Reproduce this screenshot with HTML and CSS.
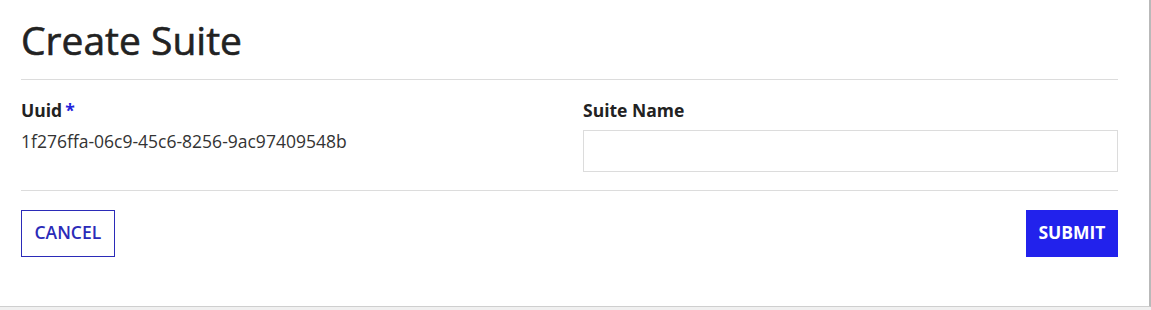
FILE: index.html
```html
<!DOCTYPE html>
<html lang="en">
<head>
    <meta charset="UTF-8">
    <meta name="viewport" content="width=device-width, initial-scale=1.0">
    <title>Create Suite</title>
    <link rel="stylesheet" href="styles.css">
</head>
<body>
    <div class="modal">
        <div class="modal-header">
            <h1>Create Suite</h1>
        </div>

        <form class="modal-body">
            <div class="form-row">
                <div class="form-group">
                    <label>Uuid<span class="required">*</span></label>
                    <div class="static-value">1f276ffa-06c9-45c6-8256-9ac97409548b</div>
                </div>
                <div class="form-group">
                    <label for="suite_name">Suite Name</label>
                    <input type="text" id="suite_name" name="suite_name">
                </div>
            </div>
        </form>

        <div class="modal-footer">
            <button type="button" class="btn btn-outline">CANCEL</button>
            <button type="submit" class="btn btn-primary">SUBMIT</button>
        </div>
    </div>
</body>
</html>
```

FILE: styles.css
```css
* {
    margin: 0;
    padding: 0;
    box-sizing: border-box;
}

body {
    font-family: 'Open Sans', 'Noto Sans', sans-serif;
    background: #f0f0f0;
    color: #222;
}

.modal {
    width: 1151px;
    height: 307px;
    background: white;
    border-right: 2px solid #b9b9b9;
    border-bottom: 1px solid #cfcfcf;
    padding: 0 31px 0 21px;
}

.modal-header {
    padding-top: 14px;
    height: 80px;
    border-bottom: 1px solid #dcdcdc;
}

.modal-header h1 {
    font-size: 39px;
    font-weight: 400;
    line-height: 52px;
    color: #222;
    -webkit-text-stroke: 0.6px #222;
}

.modal-body {
    padding: 18px 0 18px;
    border-bottom: 1px solid #dcdcdc;
}

.form-row {
    display: grid;
    grid-template-columns: 1fr 1fr;
    gap: 27px;
}

label {
    display: block;
    font-size: 17.5px;
    font-weight: 700;
    line-height: 24px;
    margin-bottom: 8px;
    color: #222;
}

.required {
    color: #2222dd;
    margin-left: 3px;
}

.static-value {
    font-size: 17.5px;
    line-height: 24px;
    color: #333;
    margin-top: -1px;
}

input {
    width: 100%;
    height: 42px;
    border: 1px solid #dcdcdc;
    padding: 0 12px;
    font-size: 17.5px;
    font-family: inherit;
}

input:focus {
    outline: none;
    border-color: #2222ee;
}

.modal-footer {
    display: flex;
    justify-content: space-between;
    padding-top: 19px;
}

.btn {
    height: 47px;
    padding: 0 12.5px 3px;
    font-family: inherit;
    font-size: 17.5px;
    font-weight: 600;
    cursor: pointer;
}

.btn-outline {
    background: white;
    color: #2b2bb8;
    border: 1px solid #2b2bb8;
}

.btn-primary {
    background: #2222ec;
    color: white;
    border: 1px solid #2222ec;
    font-weight: 700;
    padding: 0 11.5px 3px;
}
```
